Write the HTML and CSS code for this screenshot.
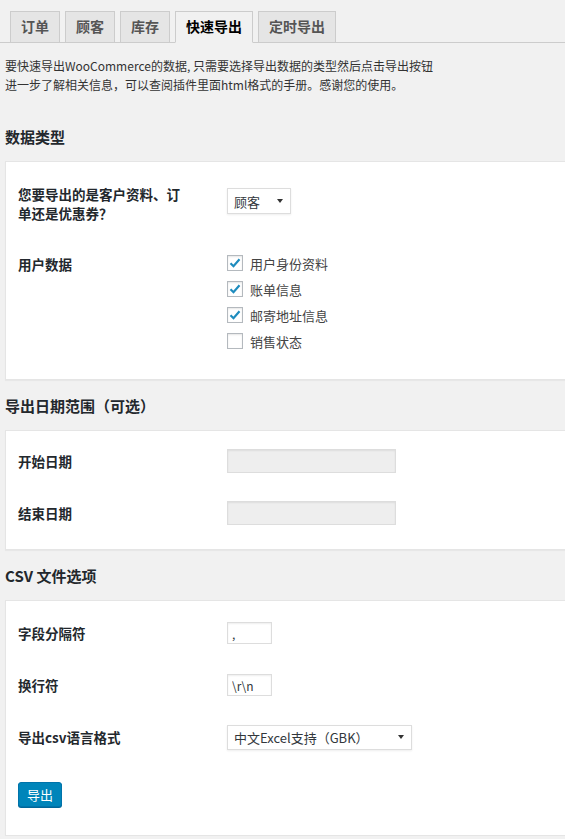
FILE: index.html
```html
<!DOCTYPE html>
<html lang="zh-CN">
<head>
<meta charset="utf-8">
<title>快速导出</title>
<link rel="stylesheet" href="styles.css">
</head>
<body>
<div class="page">
  <nav class="tabs">
    <a class="tab">订单</a>
    <a class="tab">顾客</a>
    <a class="tab">库存</a>
    <a class="tab active">快速导出</a>
    <a class="tab">定时导出</a>
  </nav>
  <p class="intro">要快速导出WooCommerce的数据, 只需要选择导出数据的类型然后点击导出按钮<br>进一步了解相关信息，可以查阅插件里面html格式的手册。感谢您的使用。</p>

  <h2 class="heading first">数据类型</h2>
  <section class="panel panel-type">
    <div class="row row-top">
      <div class="label label-wrap">您要导出的是客户资料、订单还是优惠券？</div>
      <div class="field">
        <div class="select select-type"><span class="select-text">顾客</span><svg class="arrow" width="6" height="4" viewBox="0 0 6 4"><path d="M0 0h6L3 4z" fill="#333"/></svg></div>
      </div>
    </div>
    <div class="row row-checks">
      <div class="label label-line">用户数据</div>
      <div class="field checks">
        <label class="check"><span class="box on"><svg width="14" height="14" viewBox="0 0 14 14"><path d="M2.5 7.2l3 3 6-7" fill="none" stroke="#1e8cbe" stroke-width="2.2"/></svg></span>用户身份资料</label>
        <label class="check"><span class="box on"><svg width="14" height="14" viewBox="0 0 14 14"><path d="M2.5 7.2l3 3 6-7" fill="none" stroke="#1e8cbe" stroke-width="2.2"/></svg></span>账单信息</label>
        <label class="check"><span class="box on"><svg width="14" height="14" viewBox="0 0 14 14"><path d="M2.5 7.2l3 3 6-7" fill="none" stroke="#1e8cbe" stroke-width="2.2"/></svg></span>邮寄地址信息</label>
        <label class="check"><span class="box"></span>销售状态</label>
      </div>
    </div>
  </section>

  <h2 class="heading">导出日期范围（可选）</h2>
  <section class="panel panel-date">
    <div class="row">
      <div class="label">开始日期</div>
      <div class="field"><input class="input date" type="text"></div>
    </div>
    <div class="row">
      <div class="label">结束日期</div>
      <div class="field"><input class="input date" type="text"></div>
    </div>
  </section>

  <h2 class="heading">CSV 文件选项</h2>
  <section class="panel panel-csv">
    <div class="row">
      <div class="label">字段分隔符</div>
      <div class="field"><input class="input small" type="text" value=","></div>
    </div>
    <div class="row">
      <div class="label">换行符</div>
      <div class="field"><input class="input small" type="text" value="\r\n"></div>
    </div>
    <div class="row">
      <div class="label">导出csv语言格式</div>
      <div class="field">
        <div class="select select-lang"><span class="select-text">中文Excel支持（GBK）</span><svg class="arrow" width="6" height="4" viewBox="0 0 6 4"><path d="M0 0h6L3 4z" fill="#333"/></svg></div>
      </div>
    </div>
    <button class="button" type="button">导出</button>
  </section>
</div>
</body>
</html>
```
FILE: styles.css
```css
* { box-sizing: border-box; }
html, body { margin: 0; padding: 0; }
body {
  background: #f1f1f1;
  color: #444;
  font-family: "Noto Sans CJK SC", "Noto Sans", sans-serif;
  font-size: 13px;
  overflow: hidden;
}
.page {
  padding: 11px 0 0 5px;
  width: 570px;
}
.tabs {
  display: flex;
  gap: 5px;
  border-bottom: 1px solid #ccc;
  height: 32px;
  margin-left: -5px;
  margin-right: -5px;
  padding-left: 10px;
}
.tab {
  display: block;
  height: 32px;
  padding: 0 10px;
  border: 1px solid #ccc;
  background: #e5e5e5;
  color: #555;
  font-size: 14px;
  font-weight: 700;
  line-height: 29px;
  cursor: pointer;
}
.tab.active {
  background: #f1f1f1;
  color: #000;
  border-bottom-color: #f1f1f1;
}
.intro {
  margin: 13px 0 0 0;
  font-size: 12px;
  line-height: 19px;
  color: #333;
}
.heading {
  margin: 16px 0 14px 0;
  font-size: 15px;
  line-height: 20px;
  font-weight: 700;
  color: #23282d;
}
.heading.first { margin-top: 33px; }
.panel {
  background: #fff;
  border: 1px solid #e5e5e5;
  border-right: none;
  box-shadow: 0 1px 1px rgba(0,0,0,.04);
  padding-left: 12px;
}
.panel-type { padding-top: 23px; padding-bottom: 25px; }
.panel-date { padding-top: 4px; padding-bottom: 10px; }
.panel-csv { padding-top: 6px; padding-bottom: 28px; }
.row {
  display: flex;
  align-items: center;
  min-height: 52px;
}
.row-top { align-items: flex-start; min-height: 0; }
.row-checks { align-items: flex-start; min-height: 0; margin-top: 27px; }
.label {
  width: 209px;
  flex: none;
  font-size: 13.5px;
  font-weight: 700;
  color: #23282d;
}
.label-wrap {
  line-height: 19px;
  padding-right: 39px;
}
.label-line { line-height: 26px; padding-top: 1px; }
.field { display: flex; }
.select {
  display: flex;
  align-items: center;
  justify-content: space-between;
  border: 1px solid #ddd;
  box-shadow: 0 1px 2px rgba(0,0,0,.07);
  background: #fff;
  color: #32373c;
  font-size: 13px;
  padding: 0 7px 0 6px;
}
.select-type { width: 64px; height: 26px; margin-top: 3px; }
.select-lang { width: 185px; height: 25px; }
.arrow { flex: none; }
.checks { flex-direction: column; }
.check {
  display: flex;
  align-items: center;
  height: 26px;
  font-size: 13px;
  color: #444;
}
.box {
  width: 16px;
  height: 16px;
  border: 1px solid #b4b9be;
  background: #fff;
  box-shadow: inset 0 1px 2px rgba(0,0,0,.1);
  margin-right: 7px;
  display: flex;
  align-items: center;
  justify-content: center;
}
.input {
  border: 1px solid #ddd;
  box-shadow: inset 0 1px 2px rgba(0,0,0,.07);
  background: #fff;
  color: #32373c;
  font-family: "Noto Sans CJK SC", sans-serif;
  font-size: 12px;
  padding: 0 4px;
  margin: 0;
  outline: none;
}
.input.date { width: 169px; height: 24px; background: #eee; }
.input.small { width: 45px; height: 22px; }
.button {
  margin-top: 19px;
  width: 44px;
  height: 25px;
  background: #0085ba;
  border: 1px solid #0073aa;
  border-radius: 3px;
  box-shadow: 0 1px 0 #006799;
  color: #fff;
  font-family: "Noto Sans CJK SC", sans-serif;
  font-size: 13px;
  line-height: 22px;
  padding: 0;
  cursor: pointer;
}
```
